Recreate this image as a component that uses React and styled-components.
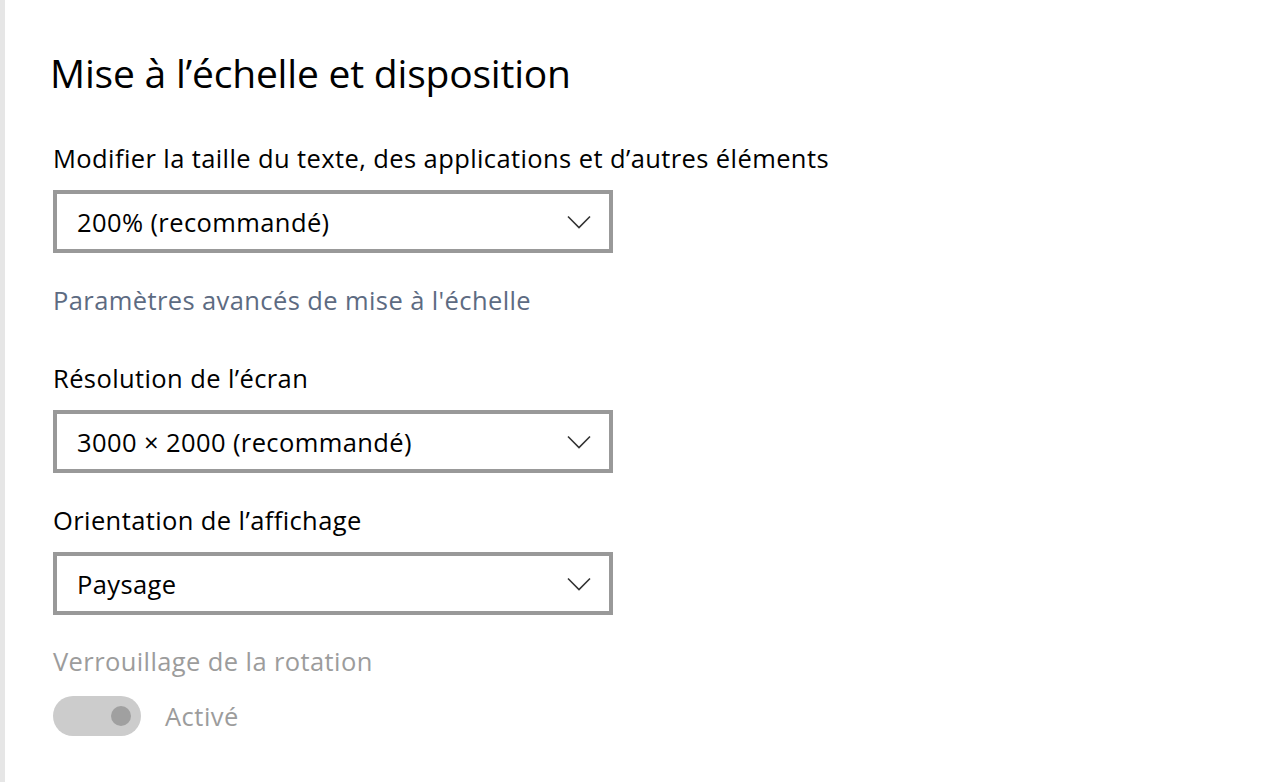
import React from 'react';
import styled, { createGlobalStyle } from 'styled-components';

const GlobalStyle = createGlobalStyle`
    html, body {
        margin: 0;
        padding: 0;
        background: #ffffff;
    }
    body {
        font-family: "Open Sans", "Noto Sans", sans-serif;
        color: #000000;
    }
`;

const Window = styled.div`
    display: flex;
    min-height: 782px;
    width: 1264px;
`;

const SideEdge = styled.div`
    width: 5px;
    background-color: #e6e6e6;
    flex-shrink: 0;
`;

const Content = styled.main`
    flex: 1;
    padding: 45px 0 0 48px;
    display: flex;
    flex-direction: column;
`;

const Title = styled.h1`
    margin: 0 0 41px -3px;
    font-size: 39px;
    font-weight: 400;
    line-height: 56px;
    letter-spacing: -0.2px;
`;

const Label = styled.div`
    font-size: 25.5px;
    letter-spacing: 0.4px;
    line-height: 32px;
    margin-bottom: 16px;
    color: ${props => (props.disabled ? '#9c9c9c' : '#000000')};
`;

const Select = styled.div`
    box-sizing: border-box;
    width: 560px;
    height: 63px;
    border: 4px solid #999999;
    background: #ffffff;
    display: flex;
    align-items: center;
    justify-content: space-between;
    padding: 0 18px 0 20px;
    font-size: 25.5px;
    letter-spacing: 0.4px;
    margin-bottom: ${props => props.$gap || 31}px;
`;

const Link = styled.a`
    font-size: 25.5px;
    letter-spacing: 0.4px;
    line-height: 32px;
    color: #5d6b82;
    text-decoration: none;
    margin-bottom: 46px;
`;

const ToggleRow = styled.div`
    display: flex;
    align-items: center;
    gap: 24px;
    margin-top: 3px;
`;

const Track = styled.div`
    width: 88px;
    height: 40px;
    border-radius: 20px;
    background-color: #cccccc;
    display: flex;
    align-items: center;
    justify-content: flex-end;
    padding-right: 10px;
    box-sizing: border-box;
`;

const Knob = styled.span`
    width: 20px;
    height: 20px;
    border-radius: 50%;
    background-color: #a0a0a0;
`;

const ToggleText = styled.span`
    font-size: 25.5px;
    letter-spacing: 0.5px;
    color: #9c9c9c;
`;

const Chevron = () => (
    <svg width="24" height="14" viewBox="0 0 24 14" fill="none">
        <path d="M1 1.5 L12 12.5 L23 1.5" stroke="#333" strokeWidth="1.6" />
    </svg>
);

const Dropdown = ({ value, gap }) => (
    <Select $gap={gap}>
        <span>{value}</span>
        <Chevron />
    </Select>
);

const App = () => {
    return (
        <>
            <GlobalStyle />
            <Window>
                <SideEdge />
                <Content>
                    <Title>Mise à l’échelle et disposition</Title>

                    <Label>Modifier la taille du texte, des applications et d’autres éléments</Label>
                    <Dropdown value="200% (recommandé)" />
                    <Link href="#">Paramètres avancés de mise à l'échelle</Link>

                    <Label>Résolution de l’écran</Label>
                    <Dropdown value="3000 × 2000 (recommandé)" />

                    <Label>Orientation de l’affichage</Label>
                    <Dropdown value="Paysage" gap={30} />

                    <Label disabled>Verrouillage de la rotation</Label>
                    <ToggleRow>
                        <Track>
                            <Knob />
                        </Track>
                        <ToggleText>Activé</ToggleText>
                    </ToggleRow>
                </Content>
            </Window>
        </>
    );
};

export default App;
